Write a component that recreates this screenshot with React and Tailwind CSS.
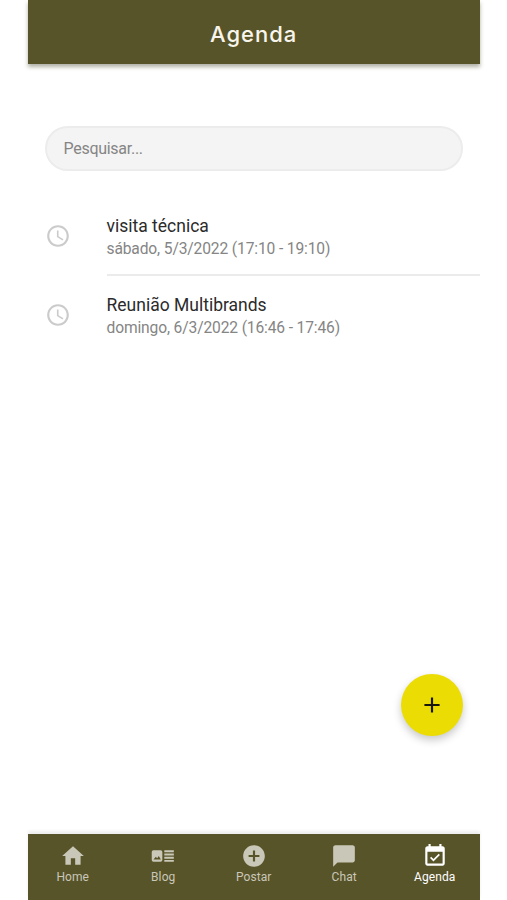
const PATHS = {
  home: "M10 20v-6h4v6h5v-8h3L12 3 2 12h3v8z",
  blog: "M3.2 6.8h6.6a1.6 1.6 0 0 1 1.6 1.6v7.4a1.6 1.6 0 0 1-1.6 1.6H3.2a1.6 1.6 0 0 1-1.6-1.6V8.4a1.6 1.6 0 0 1 1.6-1.6zM3.2 15.2h6.8L8.1 12.1l-1.5 1.9-1.2-1.2zM13.2 6.8H22v1.8h-8.8zM13.2 9.7H22v1.8h-8.8zM13.2 12.7H22v1.8h-8.8zM13.2 15.6H22v1.8h-8.8z",
  post: "M12 2C6.48 2 2 6.48 2 12s4.48 10 10 10 10-4.48 10-10S17.52 2 12 2zm5 11h-4v4h-2v-4H7v-2h4V7h2v4h4v2z",
  chat: "M20 2H4c-1.1 0-2 .9-2 2v18l4-4h14c1.1 0 2-.9 2-2V4c0-1.1-.9-2-2-2z",
  agenda:
    "M16.53 11.06L15.47 10l-4.88 4.88-2.12-2.12-1.06 1.06L10.59 17l5.94-5.94zM19 3h-1V1h-2v2H8V1H6v2H5c-1.11 0-1.99.9-1.99 2L3 19c0 1.1.89 2 2 2h14c1.1 0 2-.9 2-2V5c0-1.1-.9-2-2-2zm0 16H5V8h14v11z",
  clock:
    "M11.99 2C6.47 2 2 6.48 2 12s4.47 10 9.99 10C17.52 22 22 17.52 22 12S17.52 2 11.99 2zM12 20c-4.42 0-8-3.58-8-8s3.58-8 8-8 8 3.58 8 8-3.58 8-8 8zm.5-13H11v6l5.25 3.15.75-1.23-4.5-2.67z",
  plus: "M19 13h-6v6h-2v-6H5v-2h6V5h2v6h6v2z",
};

function Icon({ name, className }) {
  return (
    <svg viewBox="0 0 24 24" fill="currentColor" fillRule="evenodd" className={className} aria-hidden="true">
      <path d={PATHS[name]} />
    </svg>
  );
}

const EVENTS = [
  { title: "visita técnica", when: "sábado, 5/3/2022 (17:10 - 19:10)" },
  { title: "Reunião Multibrands", when: "domingo, 6/3/2022 (16:46 - 17:46)" },
];

const TABS = [
  { icon: "home", label: "Home" },
  { icon: "blog", label: "Blog" },
  { icon: "post", label: "Postar" },
  { icon: "chat", label: "Chat" },
  { icon: "agenda", label: "Agenda", active: true },
];

export default function App() {
  return (
    <div className="h-[900px] w-[507px] overflow-hidden bg-white pl-[27.5px] font-['Roboto',sans-serif]">
      <div className="relative flex h-full w-[452.4px] flex-col">
        <header className="flex h-[64px] shrink-0 items-center justify-center bg-[#585429] pt-[3px] shadow-[0_3px_4px_rgba(60,58,30,0.4)]">
          <h1 className="font-['Inter',sans-serif] text-[22px] leading-7 font-[450] tracking-[1px] text-[#f8f6ec]">
            Agenda
          </h1>
        </header>

        <main className="flex flex-1 flex-col">
          <div className="px-[17px] pt-[62px]">
            <input
              placeholder="Pesquisar..."
              className="block h-[45px] w-full rounded-full border-2 border-[#ececec] bg-[#f4f4f4] px-[17px] text-[16px] tracking-[-0.28px] outline-none placeholder:text-[#858585]"
            />
          </div>
          <ul className="mt-[26px]">
            {EVENTS.map((e, i) => (
              <li key={e.title} className="flex h-[79px]">
                <div className="flex w-[79px] shrink-0 items-center pb-[2px] pl-[17px]">
                  <Icon name="clock" className="size-[26px] text-[#cbcbcb]" />
                </div>
                <div
                  className={
                    i === 0
                      ? "flex-1 border-b-2 border-[#ebebeb] pt-[18px]"
                      : "flex-1 pt-[18px]"
                  }
                >
                  <div className="text-[17.5px] leading-[23px] text-[#2b2b2b]">{e.title}</div>
                  <div className="text-[15.6px] leading-[23px] tracking-[-0.14px] text-[#858585]">{e.when}</div>
                </div>
              </li>
            ))}
          </ul>
        </main>

        <button
          aria-label="Adicionar"
          className="absolute top-[674px] right-[17px] flex size-[62px] items-center justify-center rounded-full bg-[#ebdc04] text-[#17170a] shadow-[0_4px_8px_rgba(0,0,0,0.22)]"
        >
          <Icon name="plus" className="size-[26px]" />
        </button>

        <nav className="flex h-[66px] shrink-0 bg-[#585429] shadow-[0_-3px_3px_rgba(0,0,0,0.07)]">
          {TABS.map((t) => (
            <div
              key={t.label}
              className={
                t.active
                  ? "flex flex-1 flex-col items-center pt-[9px] text-white"
                  : "flex flex-1 flex-col items-center pt-[9px] text-[#c9c7b8]"
              }
            >
              <Icon name={t.icon} className="size-[26px]" />
              <span className="text-[12px] leading-[16px] tracking-[0.1px]">{t.label}</span>
            </div>
          ))}
        </nav>
      </div>
    </div>
  );
}
